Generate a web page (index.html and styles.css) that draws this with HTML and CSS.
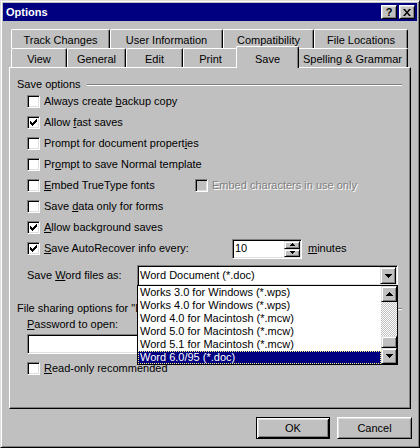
FILE: index.html
```html
<!DOCTYPE html>
<html>
<head>
<meta charset="utf-8">
<title>Options</title>
<link rel="stylesheet" href="styles.css">
</head>
<body>
<div class="dialog">
  <div class="titlebar">
    <span class="title">Options</span>
    <div class="tb-buttons">
      <div class="tb-btn help">?</div>
      <div class="tb-btn close"><svg width="8" height="7" viewBox="0 0 8 7"><path d="M0 0h2l2 2.5 2-2.5h2l-3 3.5 3 3.5h-2l-2-2.5-2 2.5h-2l3-3.5z" fill="#000"/></svg></div>
    </div>
  </div>
  <div class="body">
    <div class="tabs">
      <div class="tab-row">
        <div class="tab t-track">Track Changes</div>
        <div class="tab t-user">User Information</div>
        <div class="tab t-compat">Compatibility</div>
        <div class="tab t-files">File Locations</div>
      </div>
      <div class="tab-row">
        <div class="tab t-view">View</div>
        <div class="tab t-general">General</div>
        <div class="tab t-edit">Edit</div>
        <div class="tab t-print">Print</div>
        <div class="tab t-save sel">Save</div>
        <div class="tab t-spell">Spelling &amp; Grammar</div>
      </div>
    </div>
    <div class="panel">
      <div class="sec-head first"><span>Save options</span><div class="rule"></div></div>
      <div class="row"><span class="cb"></span><span>Always create <u>b</u>ackup copy</span></div>
      <div class="row"><span class="cb"><svg width="9" height="9" viewBox="0 0 9 9"><path d="M1 3h1v3H1zM2 4h1v3H2zM3 5h1v3H3zM4 4h1v3H4zM5 3h1v3H5zM6 2h1v3H6zM7 1h1v3H7z" fill="#000"/></svg></span><span>Allow <u>f</u>ast saves</span></div>
      <div class="row"><span class="cb"></span><span>Prompt for document propert<u>i</u>es</span></div>
      <div class="row"><span class="cb"></span><span>Pr<u>o</u>mpt to save Normal template</span></div>
      <div class="row">
        <div class="cell-embed"><span class="cb"></span><span><u>E</u>mbed TrueType fonts</span></div>
        <span class="cb disabled"></span><span class="dis-text">Embed characters in use only</span>
      </div>
      <div class="row"><span class="cb"></span><span>Save <u>d</u>ata only for forms</span></div>
      <div class="row"><span class="cb"><svg width="9" height="9" viewBox="0 0 9 9"><path d="M1 3h1v3H1zM2 4h1v3H2zM3 5h1v3H3zM4 4h1v3H4zM5 3h1v3H5zM6 2h1v3H6zM7 1h1v3H7z" fill="#000"/></svg></span><span><u>A</u>llow background saves</span></div>
      <div class="row">
        <div class="cell-auto"><span class="cb"><svg width="9" height="9" viewBox="0 0 9 9"><path d="M1 3h1v3H1zM2 4h1v3H2zM3 5h1v3H3zM4 4h1v3H4zM5 3h1v3H5zM6 2h1v3H6zM7 1h1v3H7z" fill="#000"/></svg></span><span><u>S</u>ave AutoRecover info every:</span></div>
        <div class="spin">
          <span class="spin-val">10</span>
          <div class="spin-btns">
            <div class="sb"><svg width="5" height="3" viewBox="0 0 5 3"><path d="M2 0h1v1h1v1h1v1H0V2h1V1h1z" fill="#000"/></svg></div>
            <div class="sb"><svg width="5" height="3" viewBox="0 0 5 3"><path d="M0 0h5v1H4v1H3v1H2V2H1V1H0z" fill="#000"/></svg></div>
          </div>
        </div>
        <span class="minutes"><u>m</u>inutes</span>
      </div>
      <div class="combo-row">
        <span class="combo-label">Save <u>W</u>ord files as:</span>
        <div class="combo">
          <span class="combo-val">Word Document (*.doc)</span>
          <div class="drop-btn"><svg width="7" height="4" viewBox="0 0 7 4"><path d="M0 0h7v1H6v1H5v1H4v1H3V3H2V2H1V1H0z" fill="#000"/></svg></div>
          <div class="list">
            <div class="items">
              <div class="item">Works 3.0 for Windows (*.wps)</div>
              <div class="item">Works 4.0 for Windows (*.wps)</div>
              <div class="item">Word 4.0 for Macintosh (*.mcw)</div>
              <div class="item">Word 5.0 for Macintosh (*.mcw)</div>
              <div class="item">Word 5.1 for Macintosh (*.mcw)</div>
              <div class="item sel">Word 6.0/95 (*.doc)</div>
            </div>
            <div class="sbar">
              <div class="sbtn"><svg width="7" height="4" viewBox="0 0 7 4"><path d="M3 0h1v1h1v1h1v1h1v1H0V3h1V2h1V1h1z" fill="#000"/></svg></div>
              <div class="track"></div>
              <div class="thumb"></div>
              <div class="sbtn"><svg width="7" height="4" viewBox="0 0 7 4"><path d="M0 0h7v1H6v1H5v1H4v1H3V3H2V2H1V1H0z" fill="#000"/></svg></div>
            </div>
          </div>
        </div>
      </div>
      <div class="sec-head fs"><span class="fs-label">File sharing options for "Document1"</span><div class="rule"></div></div>
      <div class="plain"><u>P</u>assword to open:</div>
      <div class="textbox"></div>
      <div class="row ro"><span class="cb"></span><span><u>R</u>ead-only recommended</span></div>
    </div>
    <div class="buttons">
      <div class="btn default">OK</div>
      <div class="btn cancel">Cancel</div>
    </div>
  </div>
</div>
</body>
</html>
```
FILE: styles.css
```css
* { box-sizing: border-box; }

body {
  margin: 0;
  font-family: "Liberation Sans", Arial, sans-serif;
  font-size: 11px;
  line-height: 13px;
  color: #000;
  background: #c0c0c0;
}

u { text-decoration: underline; text-underline-offset: 1px; }

.dialog {
  width: 420px;
  height: 448px;
  background: #c0c0c0;
  border: 1px solid;
  border-color: #dfdfdf #000 #000 #dfdfdf;
  box-shadow: inset 1px 1px #fff, inset -1px -1px #808080;
  padding: 2px;
  display: flex;
  flex-direction: column;
}

.titlebar {
  height: 18px;
  flex: none;
  background: #000080;
  color: #fff;
  display: flex;
  align-items: center;
  justify-content: space-between;
  padding: 0 2px 0 3px;
}

.title { font-weight: bold; }

.tb-buttons { display: flex; gap: 2px; }

.tb-btn {
  width: 16px;
  height: 14px;
  background: #c0c0c0;
  border: 1px solid;
  border-color: #fff #000 #000 #fff;
  box-shadow: inset 1px 1px #dfdfdf, inset -1px -1px #808080;
  display: flex;
  align-items: center;
  justify-content: center;
  color: #000;
}

.tb-btn.help { font-weight: bold; font-size: 11px; line-height: 11px; padding-top: 1px; }

.body {
  flex: 1;
  padding: 8px 6px 0 6px;
  display: flex;
  flex-direction: column;
}

.tabs { padding-left: 2px; }

.tab-row { display: flex; height: 19px; }

.tab {
  flex: none;
  height: 19px;
  background: #c0c0c0;
  border: 1px solid;
  border-bottom: none;
  border-color: #fff #000 #000 #fff;
  border-radius: 2px 2px 0 0;
  box-shadow: inset -1px 0 #808080;
  text-align: center;
  padding-top: 4px;
  white-space: nowrap;
}

.t-track { width: 99px; }
.t-user { width: 113px; }
.t-compat { width: 91px; }
.t-files { width: 94px; }
.t-view { width: 56px; }
.t-general { width: 59px; }
.t-edit { width: 57px; }
.t-print { width: 55px; }
.t-save { width: 59px; }
.t-spell { width: 111px; }

.tab.sel {
  width: 63px;
  height: 22px;
  margin: -2px -2px 0 -2px;
  padding-top: 6px;
  position: relative;
  z-index: 2;
}

.panel {
  width: 402px;
  height: 342px;
  flex: none;
  border: 1px solid;
  border-color: #fff #000 #000 #fff;
  box-shadow: inset -1px -1px #808080;
  padding: 0 8px 0 7px;
}

.sec-head {
  display: flex;
  align-items: center;
  height: 13px;
  white-space: nowrap;
}

.sec-head.first { margin-top: 10px; }
.sec-head.fs { margin-top: 16px; }

.fs-label {
  width: 120px;
  flex: none;
  overflow: hidden;
}

.rule {
  flex: 1;
  height: 2px;
  border-top: 1px solid #808080;
  border-bottom: 1px solid #fff;
  margin-left: 6px;
}

.row {
  display: flex;
  align-items: center;
  height: 21px;
  margin-left: 10px;
  white-space: nowrap;
}

.cb {
  width: 13px;
  height: 13px;
  flex: none;
  margin-right: 4px;
  background: #fff;
  border: 1px solid;
  border-color: #808080 #fff #fff #808080;
  box-shadow: inset 1px 1px #000, inset -1px -1px #dfdfdf;
  padding: 1px;
  display: flex;
}

.cb.disabled { background: #c0c0c0; }

.dis-text { color: #808080; text-shadow: 1px 1px #fff; }

.cell-embed { width: 168px; display: flex; align-items: center; }
.cell-auto { width: 205px; display: flex; align-items: center; }

.spin {
  width: 70px;
  height: 20px;
  background: #fff;
  border: 1px solid;
  border-color: #808080 #fff #fff #808080;
  box-shadow: inset 1px 1px #000, inset -1px -1px #dfdfdf;
  padding: 1px;
  display: flex;
  align-items: center;
}

.spin-val { padding-left: 1px; }

.spin-btns {
  margin-left: auto;
  width: 16px;
  height: 16px;
  display: flex;
  flex-direction: column;
}

.sb, .sbtn, .thumb, .drop-btn {
  background: #c0c0c0;
  border: 1px solid;
  border-color: #dfdfdf #000 #000 #dfdfdf;
  box-shadow: inset 1px 1px #fff, inset -1px -1px #808080;
  display: flex;
  align-items: center;
  justify-content: center;
}

.sb { height: 8px; }

.minutes { margin-left: 6px; }

.combo-row {
  display: flex;
  align-items: center;
  height: 21px;
  margin-top: 6px;
  margin-left: 10px;
  white-space: nowrap;
}

.combo-label { width: 110px; }

.combo {
  position: relative;
  width: 261px;
  height: 21px;
  background: #fff;
  border: 1px solid;
  border-color: #808080 #fff #fff #808080;
  box-shadow: inset 1px 1px #000, inset -1px -1px #dfdfdf;
  padding: 1px;
  display: flex;
  align-items: center;
}

.combo-val { flex: 1; padding-left: 1px; }

.drop-btn { width: 16px; height: 17px; }

.list {
  position: absolute;
  left: -1px;
  top: 19px;
  width: 261px;
  height: 80px;
  border: 1px solid #000;
  background: #fff;
  display: flex;
  z-index: 5;
}

.items { flex: 1; }

.item {
  height: 13px;
  padding-left: 2px;
  white-space: nowrap;
  overflow: hidden;
}

.item.sel {
  background: #000080;
  color: #fff;
  outline: 1px dotted #ffff80;
  outline-offset: -1px;
}

.sbar {
  width: 16px;
  display: flex;
  flex-direction: column;
}

.sbtn { height: 16px; }

.track {
  height: 34px;
  background-color: #c0c0c0;
  background-image: conic-gradient(#fff 0 25%, #c0c0c0 0 50%, #fff 0 75%, #c0c0c0 0);
  background-size: 2px 2px;
}

.thumb { height: 12px; }

.plain { margin-left: 10px; margin-top: 3px; height: 13px; }

.textbox {
  margin-left: 10px;
  margin-top: 3px;
  width: 170px;
  height: 20px;
  background: #fff;
  border: 1px solid;
  border-color: #808080 #fff #fff #808080;
  box-shadow: inset 1px 1px #000, inset -1px -1px #dfdfdf;
}

.row.ro { margin-top: 4px; }

.buttons {
  display: flex;
  justify-content: flex-end;
  gap: 7px;
  margin-top: 8px;
  margin-right: -1px;
}

.btn {
  height: 22px;
  display: flex;
  align-items: center;
  justify-content: center;
  background: #c0c0c0;
  border: 1px solid;
  border-color: #fff #000 #000 #fff;
  box-shadow: inset 1px 1px #dfdfdf, inset -1px -1px #808080;
}

.btn.default {
  width: 74px;
  border-color: #000;
  box-shadow: inset 1px 1px #fff, inset -1px -1px #000, inset 2px 2px #dfdfdf, inset -2px -2px #808080;
}

.btn.cancel { width: 75px; }
```
